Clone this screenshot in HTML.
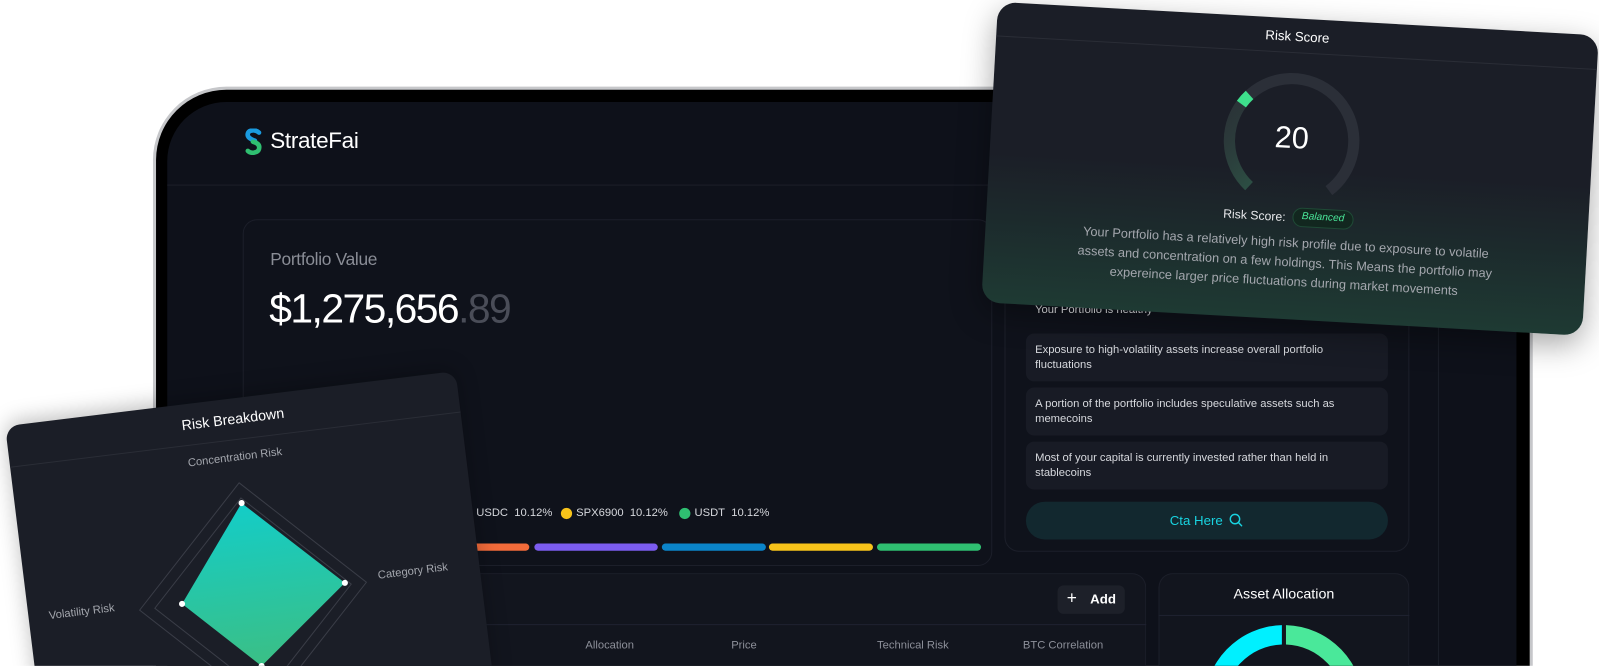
<!DOCTYPE html>
<html><head><meta charset="utf-8">
<style>
*{margin:0;padding:0;box-sizing:border-box}
html,body{width:1599px;height:666px;overflow:hidden;background:#fff;font-family:"Liberation Sans",sans-serif}
#o{position:absolute;left:0;top:0;width:1599px;height:666px;overflow:hidden}
#w{position:absolute;left:0;top:0;width:1568px;height:653px;transform:scale(1.0198);transform-origin:0 0;overflow:hidden}
.a{position:absolute}
.t{position:absolute;white-space:nowrap}
</style></head><body><div id="o"><div id="w">
<!-- device -->
<div class="a" style="left:150px;top:85px;width:1353px;height:568px;border-radius:72px 72px 0 0;background:#c6c7ca"></div>
<div class="a" style="left:153px;top:88px;width:1347px;height:565px;border-radius:69px 69px 0 0;background:#000"></div>
<div class="a" style="left:164px;top:100px;width:1323px;height:553px;border-radius:58px 58px 0 0;background:#0e111a"></div>
<!-- logo -->
<svg class="a" style="left:239px;top:126px" width="20" height="26" viewBox="0 0 20 26">
<path d="M15 4 C12 1 5 1 4 5 C3 9 8 11 11 12" fill="none" stroke="#1a9be0" stroke-width="4.5" stroke-linecap="round"/>
<path d="M9 13 C13 14 16 16 15 20 C14 24 7 25 4 22" fill="none" stroke="#2fbf71" stroke-width="4.5" stroke-linecap="round"/>
</svg>
<div class="t" style="left:265px;top:125px;font-size:22px;color:#fff;letter-spacing:-0.3px">StrateFai</div>
<div class="a" style="left:164px;top:181px;width:1323px;height:1px;background:#1c1f29"></div>
<div class="a" style="left:1410px;top:182px;width:1px;height:471px;background:#1c1f29"></div>
<!-- portfolio card -->
<div class="a" style="left:238px;top:215px;width:735px;height:340px;border:1px solid #1c1f2a;border-radius:14px;background:#0f121b"></div>
<div class="t" style="left:265px;top:245px;font-size:17px;color:#8a8d96;letter-spacing:-0.3px">Portfolio Value</div>
<div class="t" style="left:264px;top:281px;font-size:40px;color:#fff;letter-spacing:-1.5px">$1,275,656<span style="color:#4a4d58">.89</span></div>
<div class="t" style="left:467px;top:497px;font-size:11px;color:#d6d8dd">USDC&nbsp; 10.12%</div>
<div class="a" style="left:550px;top:498px;width:11px;height:11px;border-radius:50%;background:#f7c31a"></div>
<div class="t" style="left:565px;top:497px;font-size:11px;color:#d6d8dd">SPX6900&nbsp; 10.12%</div>
<div class="a" style="left:666px;top:498px;width:11px;height:11px;border-radius:50%;background:#2fbf71"></div>
<div class="t" style="left:681px;top:497px;font-size:11px;color:#d6d8dd">USDT&nbsp; 10.12%</div>
<div class="a" style="left:460px;top:533px;width:59px;height:7px;border-radius:4px;background:#f26b3a"></div>
<div class="a" style="left:524px;top:533px;width:121px;height:7px;border-radius:4px;background:#7b5cf0"></div>
<div class="a" style="left:649px;top:533px;width:102px;height:7px;border-radius:4px;background:#0b84c9"></div>
<div class="a" style="left:754px;top:533px;width:102px;height:7px;border-radius:4px;background:#f7c31a"></div>
<div class="a" style="left:860px;top:533px;width:102px;height:7px;border-radius:4px;background:#2fbf71"></div>
<!-- insights -->
<div class="a" style="left:985px;top:270px;width:397px;height:271px;border:1px solid #1c1f2a;border-radius:14px;background:#0f121b"></div>
<div class="t" style="left:1015px;top:298px;font-size:11px;color:#e6e7ea">Your Portfolio is healthy</div>
<div class="a" style="left:1006px;top:327px;width:355px;height:47px;border-radius:8px;background:#181b25"></div>
<div class="t" style="left:1015px;top:336px;font-size:11px;line-height:15px;color:#d6d8dd">Exposure to high-volatility assets increase overall portfolio<br>fluctuations</div>
<div class="a" style="left:1006px;top:380px;width:355px;height:47px;border-radius:8px;background:#181b25"></div>
<div class="t" style="left:1015px;top:389px;font-size:11px;line-height:15px;color:#d6d8dd">A portion of the portfolio includes speculative assets such as<br>memecoins</div>
<div class="a" style="left:1006px;top:433px;width:355px;height:47px;border-radius:8px;background:#181b25"></div>
<div class="t" style="left:1015px;top:442px;font-size:11px;line-height:15px;color:#d6d8dd">Most of your capital is currently invested rather than held in<br>stablecoins</div>
<div class="a" style="left:1006px;top:492px;width:355px;height:37px;border-radius:19px;background:#12282f"></div>
<div class="t" style="left:1147px;top:503px;font-size:13px;color:#19d3e0">Cta Here</div>
<svg class="a" style="left:1205px;top:503px" width="14" height="14" viewBox="0 0 14 14"><circle cx="6" cy="6" r="4.6" fill="none" stroke="#19d3e0" stroke-width="1.4"/><path d="M9.5 9.5 L12.5 12.5" stroke="#19d3e0" stroke-width="1.4" stroke-linecap="round"/></svg>
<!-- table card -->
<div class="a" style="left:238px;top:562px;width:886px;height:91px;border:1px solid #1c1f2a;border-bottom:none;border-radius:14px 14px 0 0;background:#12151e"></div>
<div class="a" style="left:238px;top:612px;width:886px;height:1px;background:#1f2230"></div>
<div class="a" style="left:1037px;top:574px;width:66px;height:28px;border-radius:6px;background:#1d2029"></div>
<div class="t" style="left:1046px;top:577px;font-size:17px;color:#fff">+</div>
<div class="t" style="left:1069px;top:580px;font-size:13px;color:#fff;font-weight:bold">Add</div>
<div class="t" style="left:574px;top:627px;font-size:11px;color:#8d909a">Allocation</div>
<div class="t" style="left:717px;top:627px;font-size:11px;color:#8d909a">Price</div>
<div class="t" style="left:860px;top:627px;font-size:11px;color:#8d909a">Technical Risk</div>
<div class="t" style="left:1003px;top:627px;font-size:11px;color:#8d909a">BTC Correlation</div>
<!-- asset allocation -->
<div class="a" style="left:1136px;top:562px;width:246px;height:91px;border:1px solid #1c1f2a;border-bottom:none;border-radius:14px 14px 0 0;background:#12151e"></div>
<div class="t" style="left:1136px;top:574px;width:246px;text-align:center;font-size:14px;color:#fff">Asset Allocation</div>
<div class="a" style="left:1136px;top:603px;width:246px;height:1px;background:#1f2230"></div>
<svg class="a" style="left:1136px;top:604px" width="246" height="49" viewBox="0 0 246 49">
<path d="M121 9 A78 78 0 0 0 45 88 L64 88 A59 59 0 0 1 121 28 Z" fill="#00f0ff"/>
<path d="M125 9 A78 78 0 0 1 201 88 L182 88 A59 59 0 0 0 125 28 Z" fill="#4ae89a"/>
</svg>
<!-- Risk score card -->
<div class="a" style="left:970px;top:18px;width:590px;height:295px;border-radius:18px;transform:rotate(3.2deg);background:linear-gradient(180deg,#1b1e27 0%,#1b1e27 50%,#1e3a33 100%);box-shadow:0 10px 30px rgba(0,0,0,.35);overflow:hidden">
 <div class="t" style="left:0;top:10px;width:590px;text-align:center;font-size:13px;color:#fff">Risk Score</div>
 <div class="a" style="left:0;top:33px;width:590px;height:1px;background:#2a2d36"></div>
 <svg class="a" style="left:225px;top:50px" width="140" height="140" viewBox="0 0 140 140">
  <defs><linearGradient id="g1" x1="0" y1="1" x2="0" y2="0"><stop offset="0" stop-color="#2a3d38" stop-opacity=".4"/><stop offset="1" stop-color="#2f7a58"/></linearGradient></defs>
  <circle cx="70" cy="70" r="61" fill="none" stroke="#2b2f38" stroke-width="11" stroke-dasharray="298 400" transform="rotate(130 70 70)"/>
  <circle cx="70" cy="70" r="61" fill="none" stroke="url(#g1)" stroke-width="11" stroke-dasharray="92 400" transform="rotate(130 70 70)"/>
  <circle cx="70" cy="70" r="61" fill="none" stroke="#3ee08c" stroke-width="11" stroke-dasharray="12 400" transform="rotate(213 70 70)"/>
 </svg>
 <div class="t" style="left:0;top:101px;width:590px;text-align:center;font-size:30px;color:#fff">20</div>
 <div class="t" style="left:232px;top:188px;font-size:12px;color:#e6e7ea">Risk Score:</div>
 <div class="a" style="left:300px;top:185px;width:60px;height:19px;border-radius:10px;background:#12271f;border:1px solid #1f4a36"></div>
 <div class="t" style="left:300px;top:188px;width:60px;text-align:center;font-size:10px;color:#4ae89a;font-style:italic">Balanced</div>
 <div class="t" style="left:0;top:211px;width:590px;text-align:center;font-size:12.5px;line-height:19px;color:#a4a7ae;white-space:normal;padding:0 90px">Your Portfolio has a relatively high risk profile due to exposure to volatile assets and concentration on a few holdings. This Means the portfolio may expereince larger price fluctuations during market movements</div>
</div>
<!-- Risk breakdown card -->
<div class="a" style="left:5px;top:418px;width:445px;height:305px;border-radius:14px 14px 0 0;transform:rotate(-7deg);transform-origin:0 0;background:#1b1e27;box-shadow:0 -4px 20px rgba(0,0,0,.25);overflow:hidden">
 <div class="t" style="left:0;top:12px;width:445px;text-align:center;font-size:14px;color:#fff">Risk Breakdown</div>
 <div class="a" style="left:0;top:40px;width:445px;height:1px;background:#2a2d36"></div>
 <div class="t" style="left:0;top:52px;width:440px;text-align:center;font-size:11px;color:#a4a7ae">Concentration Risk</div>
 <div class="t" style="left:20px;top:184px;font-size:11px;color:#a4a7ae">Volatility Risk</div>
 <div class="t" style="left:345px;top:184px;font-size:11px;color:#a4a7ae">Category Risk</div>
 <svg class="a" style="left:0;top:0" width="445" height="305" viewBox="0 0 445 305">
  <defs><linearGradient id="g2" x1="0" y1="103" x2="0" y2="264" gradientUnits="userSpaceOnUse"><stop offset="0" stop-color="#13cdc8"/><stop offset="1" stop-color="#3bbf85"/></linearGradient></defs>
  <path d="M221 83 L333 195 L221 307 L109 195 Z" fill="none" stroke="#3a3d47"/>
  <path d="M221 98 L318 195 L221 292 L124 195 Z" fill="none" stroke="#3a3d47"/>
  <path d="M221 103 L312 193 L221 264 L151 194 Z" fill="url(#g2)"/>
  <circle cx="221" cy="103" r="3" fill="#fff"/><circle cx="312" cy="193" r="3" fill="#fff"/><circle cx="151" cy="194" r="3" fill="#fff"/><circle cx="221" cy="264" r="3" fill="#fff"/>
 </svg>
</div>
</div></div></body></html>
